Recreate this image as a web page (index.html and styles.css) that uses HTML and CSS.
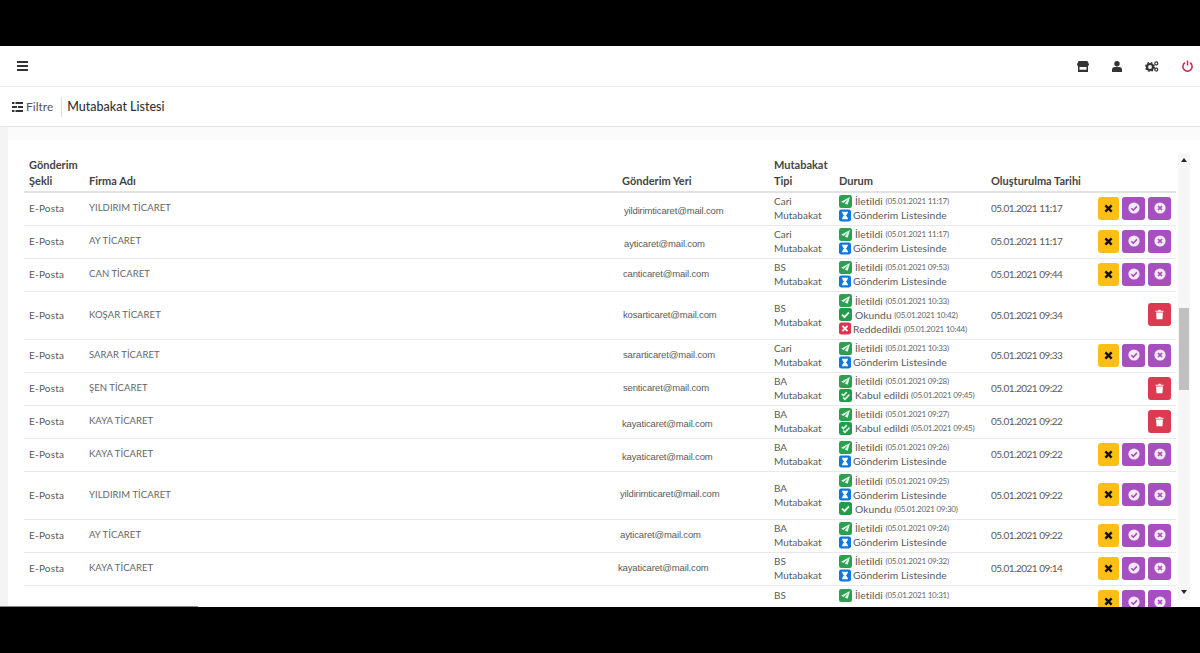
FILE: index.html
```html
<!DOCTYPE html>
<html lang="tr">
<head>
<meta charset="UTF-8" />
<title>Mutabakat Listesi</title>
<link rel="stylesheet" href="styles.css">
</head>
<body>
  <svg class="defs" width="0" height="0">
    <symbol id="plane" viewBox="0 0 14 14"><rect width="14" height="14" rx="2.5" fill="#2ba14f"/><path d="M11.8 2.200 2.200 7.400l2.600 1.100 5.100-4.100-3.700 4.800 3.200 1.400z" fill="#e4f5e9"/></symbol>
    <symbol id="hourglass" viewBox="0 0 14 14"><rect width="14" height="14" rx="2.5" fill="#0d78e0"/><path d="M3.5 2.5h7v1.200h-.6c0 1.800-1 2.600-1.900 3.300.9.700 1.900 1.500 1.900 3.300h.6v1.200h-7v-1.200h.6c0-1.800 1-2.600 1.900-3.300-.9-.7-1.900-1.500-1.900-3.300h-.6z" fill="#fff"/></symbol>
    <symbol id="okay" viewBox="0 0 14 14"><rect width="14" height="14" rx="2.5" fill="#1f9d48"/><path d="m3.300 7.200 2.600 2.600 4.800-5" fill="none" stroke="#fff" stroke-width="2"/></symbol>
    <symbol id="double" viewBox="0 0 14 14"><rect width="14" height="14" rx="2.5" fill="#1f9d48"/><path d="m3 5.200 1.800 1.800 3.600-3.600M4.600 9.200l1.800 1.800 4.800-5" fill="none" stroke="#e3f4e8" stroke-width="1.800"/></symbol>
    <symbol id="denied" viewBox="0 0 14 14"><rect width="14" height="14" rx="2.5" fill="#dc3450"/><path d="m4 4 6 6m0-6-6 6" stroke="#fff" stroke-width="2.200"/></symbol>
    <symbol id="x" viewBox="0 0 10 10"><path d="m1.500 1.500 7 7m0-7-7 7" stroke="#111" stroke-width="2.600"/></symbol>
    <symbol id="ccheck" viewBox="0 0 12 12"><circle cx="6" cy="6" r="5.600" fill="#f4e9f7"/><path d="m3.300 6.200 2 2 3.600-3.800" fill="none" stroke="#a54dbd" stroke-width="1.600"/></symbol>
    <symbol id="cx" viewBox="0 0 12 12"><circle cx="6" cy="6" r="5.600" fill="#f4e9f7"/><path d="m4 4 4 4m0-4-4 4" stroke="#a54dbd" stroke-width="1.700"/></symbol>
    <symbol id="trash" viewBox="0 0 10 12"><path d="M.5 1.800h3L4 .6h2l.5 1.200h3v1.200H.5zM1.200 3.700h7.600l-.5 7.700H1.700z" fill="#fff"/></symbol>
  </svg>

  <div class="screen">
    <header class="topbar">
      <svg class="ico-bars" width="11" height="10" viewBox="0 0 11 10"><path d="M0 0h11v2H0zM0 4h11v2H0zM0 8h11v2H0z" fill="#333"/></svg>
      <nav class="topicons">
        <svg width="12" height="11" viewBox="0 0 12 11"><path d="M1.600 0h8.800L12 3.200c0 1-.7 1.600-1 1.700V11H1V4.900C.7 4.800 0 4.200 0 3.200zM2.500 6v2.800h7V6z" fill="#333"/></svg>
        <svg width="10" height="11" viewBox="0 0 10 11"><circle cx="5" cy="2.700" r="2.700" fill="#333"/><path d="M0 11V8.500C0 7 1.200 6 2.600 6h4.800C8.800 6 10 7 10 8.500V11z" fill="#333"/></svg>
        <svg width="14" height="11" viewBox="0 0 14 11"><circle cx="5" cy="6" r="3" fill="none" stroke="#333" stroke-width="2.200"/><circle cx="5" cy="6" r="4.400" fill="none" stroke="#333" stroke-width="1.200" stroke-dasharray="1.700 1.800"/><circle cx="11.300" cy="2.400" r="1.500" fill="none" stroke="#333" stroke-width="1.200"/><circle cx="11.300" cy="8.600" r="1.500" fill="none" stroke="#333" stroke-width="1.200"/></svg>
        <svg width="11" height="12" viewBox="0 0 11 12"><path d="M3 2.700a4.600 4.600 0 1 0 5 0" fill="none" stroke="#c9284f" stroke-width="1.500"/><path d="M5.500.5v5" stroke="#c9284f" stroke-width="1.500"/></svg>
      </nav>
    </header>

    <div class="subbar">
      <span class="filter">
        <svg width="11" height="10" viewBox="0 0 11 10"><path d="M0 0h2.500v2H0zM3.500 0H11v2H3.500zM0 4h5v2H0zM6 4h5v2H6zM0 8h2.500v2H0zM3.500 8H11v2H3.500z" fill="#333"/></svg>
        Filtre
      </span>
      <h1>Mutabakat Listesi</h1>
    </div>

    <main class="content">
      <div class="card">
        <div class="table-wrap">
          <table>
            <colgroup>
              <col class="c-send"><col class="c-firm"><col class="c-mail"><col class="c-type"><col class="c-state"><col class="c-date"><col class="c-act">
            </colgroup>
            <thead>
              <tr>
                <th>Gönderim Şekli</th>
                <th>Firma Adı</th>
                <th>Gönderim Yeri</th>
                <th>Mutabakat Tipi</th>
                <th>Durum</th>
                <th>Oluşturulma Tarihi</th>
                <th></th>
              </tr>
            </thead>
            <tbody>
              <tr>
                <td>E-Posta</td><td>YILDIRIM TİCARET</td><td class="mail shift-2 low">yildirimticaret@mail.com</td><td>Cari<br>Mutabakat</td>
                <td>
                  <div class="st"><svg><use href="#plane"/></svg>İletildi <small>(05.01.2021 11:17)</small></div>
                  <div class="st"><svg class="narrow"><use href="#hourglass"/></svg>Gönderim Listesinde</div>
                </td>
                <td>05.01.2021 11:17</td>
                <td><div class="acts"><a class="btn yellow"><svg><use href="#x"/></svg></a><a class="btn purple"><svg><use href="#ccheck"/></svg></a><a class="btn purple"><svg><use href="#cx"/></svg></a></div></td>
              </tr>
              <tr>
                <td>E-Posta</td><td>AY TİCARET</td><td class="mail shift-2 low">ayticaret@mail.com</td><td>Cari<br>Mutabakat</td>
                <td>
                  <div class="st"><svg><use href="#plane"/></svg>İletildi <small>(05.01.2021 11:17)</small></div>
                  <div class="st"><svg class="narrow"><use href="#hourglass"/></svg>Gönderim Listesinde</div>
                </td>
                <td>05.01.2021 11:17</td>
                <td><div class="acts"><a class="btn yellow"><svg><use href="#x"/></svg></a><a class="btn purple"><svg><use href="#ccheck"/></svg></a><a class="btn purple"><svg><use href="#cx"/></svg></a></div></td>
              </tr>
              <tr>
                <td>E-Posta</td><td>CAN TİCARET</td><td class="mail shift-1">canticaret@mail.com</td><td>BS<br>Mutabakat</td>
                <td>
                  <div class="st"><svg><use href="#plane"/></svg>İletildi <small>(05.01.2021 09:53)</small></div>
                  <div class="st"><svg class="narrow"><use href="#hourglass"/></svg>Gönderim Listesinde</div>
                </td>
                <td>05.01.2021 09:44</td>
                <td><div class="acts"><a class="btn yellow"><svg><use href="#x"/></svg></a><a class="btn purple"><svg><use href="#ccheck"/></svg></a><a class="btn purple"><svg><use href="#cx"/></svg></a></div></td>
              </tr>
              <tr class="tall">
                <td>E-Posta</td><td>KOŞAR TİCARET</td><td class="mail shift-1">kosarticaret@mail.com</td><td>BS<br>Mutabakat</td>
                <td>
                  <div class="st"><svg><use href="#plane"/></svg>İletildi <small>(05.01.2021 10:33)</small></div>
                  <div class="st"><svg><use href="#okay"/></svg>Okundu <small>(05.01.2021 10:42)</small></div>
                  <div class="st"><svg class="narrow"><use href="#denied"/></svg>Reddedildi <small>(05.01.2021 10:44)</small></div>
                </td>
                <td>05.01.2021 09:34</td>
                <td><div class="acts"><a class="btn red"><svg><use href="#trash"/></svg></a></div></td>
              </tr>
              <tr>
                <td>E-Posta</td><td>SARAR TİCARET</td><td class="mail shift-1">sararticaret@mail.com</td><td>Cari<br>Mutabakat</td>
                <td>
                  <div class="st"><svg><use href="#plane"/></svg>İletildi <small>(05.01.2021 10:33)</small></div>
                  <div class="st"><svg class="narrow"><use href="#hourglass"/></svg>Gönderim Listesinde</div>
                </td>
                <td>05.01.2021 09:33</td>
                <td><div class="acts"><a class="btn yellow"><svg><use href="#x"/></svg></a><a class="btn purple"><svg><use href="#ccheck"/></svg></a><a class="btn purple"><svg><use href="#cx"/></svg></a></div></td>
              </tr>
              <tr>
                <td>E-Posta</td><td>ŞEN TİCARET</td><td class="mail shift-1">senticaret@mail.com</td><td>BA<br>Mutabakat</td>
                <td>
                  <div class="st"><svg><use href="#plane"/></svg>İletildi <small>(05.01.2021 09:28)</small></div>
                  <div class="st"><svg><use href="#double"/></svg>Kabul edildi <small>(05.01.2021 09:45)</small></div>
                </td>
                <td>05.01.2021 09:22</td>
                <td><div class="acts"><a class="btn red"><svg><use href="#trash"/></svg></a></div></td>
              </tr>
              <tr>
                <td>E-Posta</td><td>KAYA TİCARET</td><td class="mail low">kayaticaret@mail.com</td><td>BA<br>Mutabakat</td>
                <td>
                  <div class="st"><svg><use href="#plane"/></svg>İletildi <small>(05.01.2021 09:27)</small></div>
                  <div class="st"><svg><use href="#double"/></svg>Kabul edildi <small>(05.01.2021 09:45)</small></div>
                </td>
                <td>05.01.2021 09:22</td>
                <td><div class="acts"><a class="btn red"><svg><use href="#trash"/></svg></a></div></td>
              </tr>
              <tr>
                <td>E-Posta</td><td>KAYA TİCARET</td><td class="mail low">kayaticaret@mail.com</td><td>BA<br>Mutabakat</td>
                <td>
                  <div class="st"><svg><use href="#plane"/></svg>İletildi <small>(05.01.2021 09:26)</small></div>
                  <div class="st"><svg class="narrow"><use href="#hourglass"/></svg>Gönderim Listesinde</div>
                </td>
                <td>05.01.2021 09:22</td>
                <td><div class="acts"><a class="btn yellow"><svg><use href="#x"/></svg></a><a class="btn purple"><svg><use href="#ccheck"/></svg></a><a class="btn purple"><svg><use href="#cx"/></svg></a></div></td>
              </tr>
              <tr class="tall">
                <td>E-Posta</td><td>YILDIRIM TİCARET</td><td class="mail back-2 high">yildirimticaret@mail.com</td><td>BA<br>Mutabakat</td>
                <td>
                  <div class="st"><svg><use href="#plane"/></svg>İletildi <small>(05.01.2021 09:25)</small></div>
                  <div class="st"><svg class="narrow"><use href="#hourglass"/></svg>Gönderim Listesinde</div>
                  <div class="st"><svg><use href="#okay"/></svg>Okundu <small>(05.01.2021 09:30)</small></div>
                </td>
                <td>05.01.2021 09:22</td>
                <td><div class="acts"><a class="btn yellow"><svg><use href="#x"/></svg></a><a class="btn purple"><svg><use href="#ccheck"/></svg></a><a class="btn purple"><svg><use href="#cx"/></svg></a></div></td>
              </tr>
              <tr>
                <td>E-Posta</td><td>AY TİCARET</td><td class="mail back-2">ayticaret@mail.com</td><td>BA<br>Mutabakat</td>
                <td>
                  <div class="st"><svg><use href="#plane"/></svg>İletildi <small>(05.01.2021 09:24)</small></div>
                  <div class="st"><svg class="narrow"><use href="#hourglass"/></svg>Gönderim Listesinde</div>
                </td>
                <td>05.01.2021 09:22</td>
                <td><div class="acts"><a class="btn yellow"><svg><use href="#x"/></svg></a><a class="btn purple"><svg><use href="#ccheck"/></svg></a><a class="btn purple"><svg><use href="#cx"/></svg></a></div></td>
              </tr>
              <tr>
                <td>E-Posta</td><td>KAYA TİCARET</td><td class="mail back-4">kayaticaret@mail.com</td><td>BS<br>Mutabakat</td>
                <td>
                  <div class="st"><svg><use href="#plane"/></svg>İletildi <small>(05.01.2021 09:32)</small></div>
                  <div class="st"><svg class="narrow"><use href="#hourglass"/></svg>Gönderim Listesinde</div>
                </td>
                <td>05.01.2021 09:14</td>
                <td><div class="acts"><a class="btn yellow"><svg><use href="#x"/></svg></a><a class="btn purple"><svg><use href="#ccheck"/></svg></a><a class="btn purple"><svg><use href="#cx"/></svg></a></div></td>
              </tr>
              <tr class="cut">
                <td></td><td></td><td></td><td>BS</td>
                <td>
                  <div class="st"><svg><use href="#plane"/></svg>İletildi <small>(05.01.2021 10:31)</small></div>
                </td>
                <td></td>
                <td><div class="acts"><a class="btn yellow"><svg><use href="#x"/></svg></a><a class="btn purple"><svg><use href="#ccheck"/></svg></a><a class="btn purple"><svg><use href="#cx"/></svg></a></div></td>
              </tr>
            </tbody>
          </table>
        </div>
        <div class="scrollbar">
          <span class="arrow-up"></span>
          <span class="thumb"></span>
          <span class="arrow-down"></span>
        </div>
      </div>
    </main>
    <span class="seek"></span>
  </div>
</body>
</html>
```

FILE: styles.css
```css
body {
  margin: 0;
  background: #000;
  color: #5a5a5a;
  font-family: Lato, "Open Sans", sans-serif;
  font-size: 10px;
}
.defs {
  display: block;
  height: 0;
}
.screen {
  position: relative;
  height: 561px;
  margin: 46px 0;
  background: #fff;
  display: flex;
  flex-direction: column;
  overflow: hidden;
}
.seek {
  position: absolute;
  left: 0;
  bottom: 0;
  width: 198px;
  height: 1px;
  background: #8a8a8a;
}
.topbar {
  flex: 0 0 41px;
  display: flex;
  align-items: center;
  justify-content: space-between;
  padding: 0 7px 0 17px;
  border-bottom: 1px solid #ececec;
  box-sizing: border-box;
}
.topicons {
  display: flex;
  align-items: center;
  gap: 23px;
}
.subbar {
  flex: 0 0 40px;
  display: flex;
  align-items: center;
  padding-left: 12px;
  border-bottom: 1px solid #e6e6e6;
  box-sizing: border-box;
}
.filter {
  display: flex;
  align-items: center;
  gap: 3px;
  font-size: 12px;
  color: #555;
  height: 20px;
  padding-right: 8px;
  border-right: 1px solid #ddd;
}
h1 {
  margin: 0 0 0 5px;
  font-size: 12.5px;
  font-weight: 500;
  color: #333;
}
.content {
  flex: 1;
  min-height: 0;
  background: #fbfbfb;
  border-left: 8px solid #f4f4f4;
  padding-top: 13px;
  overflow: hidden;
}
.card {
  background: #fff;
  height: 100%;
  display: flex;
  padding: 17px 10px 0 16px;
}
.table-wrap {
  flex: 0 0 1152px;
  height: 500px;
}
table {
  table-layout: fixed;
  width: 1152px;
  border-collapse: collapse;
}
.c-send { width: 60px; }
.c-firm { width: 533px; }
.c-mail { width: 152px; }
.c-type { width: 65px; }
.c-state { width: 152px; }
.c-date { width: 107px; }
.c-act { width: 83px; }
th {
  text-align: left;
  vertical-align: bottom;
  font-size: 11px;
  font-weight: 700;
  line-height: 16px;
  color: #444;
  padding: 0 5px 2px;
  border-bottom: 2px solid #e2e2e2;
}
td {
  padding: 1px 5px 3px;
  line-height: 14px;
  vertical-align: middle;
  border-bottom: 1px solid #e9e9e9;
}
td:nth-child(1) {
  letter-spacing: .2px;
}
td:nth-child(2) {
  font-size: 9.5px;
  letter-spacing: .05px;
  color: #666;
}
td:nth-child(6) {
  letter-spacing: -.5px;
}
tbody tr {
  height: 33px;
}
tbody tr.tall {
  height: 48px;
}
.mail {
  font-family: "Liberation Sans", Arial, sans-serif;
  font-size: 9.5px;
  letter-spacing: -.15px;
}
.shift-1 { padding-left: 6px; }
.shift-2 { padding-left: 7px; }
.back-2 { padding-left: 3px; }
.back-4 { padding-left: 1px; }
.low { padding-top: 5px; padding-bottom: 2px; }
.high { padding-bottom: 4px; }
.st {
  display: flex;
  align-items: center;
  height: 14px;
  white-space: pre;
  font-size: 10.3px;
  letter-spacing: .05px;
}
.st svg {
  width: 13px;
  height: 13px;
  margin-right: 3px;
  flex: none;
}
.st svg.narrow {
  width: 12px;
  margin-right: 2px;
}
small {
  font-size: 8px;
  letter-spacing: -.25px;
  color: #666;
}
.acts {
  display: flex;
  justify-content: flex-end;
  gap: 3px;
}
.cut td {
  vertical-align: top;
  padding-top: 2px;
}
.cut .acts {
  padding-top: 2px;
}
.btn {
  height: 23px;
  width: 23px;
  border-radius: 3px;
  display: flex;
  align-items: center;
  justify-content: center;
  flex: none;
}
.yellow {
  background: #fdbf16;
  width: 21px;
}
.yellow svg {
  width: 9px;
  height: 9px;
}
.purple {
  background: #a64fbf;
}
.purple svg {
  width: 12px;
  height: 12px;
}
.red {
  background: #dc3a50;
}
.red svg {
  width: 9px;
  height: 11px;
}
.scrollbar {
  flex: 0 0 12px;
  height: 447px;
  margin: -4px 0 0 2px;
  background: #f6f6f6;
  display: flex;
  flex-direction: column;
  align-items: center;
}
.arrow-up {
  margin-top: 5px;
  border: 3px solid transparent;
  border-top: 0;
  border-bottom: 4px solid #222;
}
.thumb {
  width: 10px;
  height: 82px;
  background: #c0c0c0;
  margin: 146px 0 auto;
}
.arrow-down {
  margin-bottom: 6px;
  border: 3px solid transparent;
  border-bottom: 0;
  border-top: 4px solid #222;
}
```
